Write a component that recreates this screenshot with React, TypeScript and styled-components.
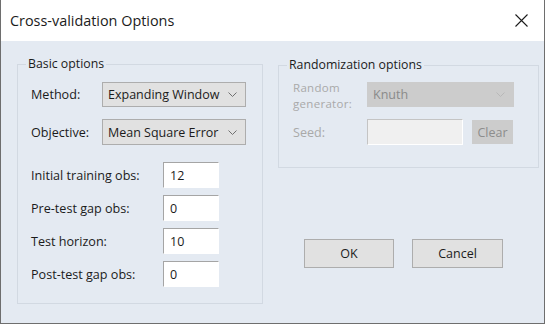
import styled, { createGlobalStyle } from 'styled-components'

const GlobalStyle = createGlobalStyle`
	html, body {
		margin: 0;
		padding: 0;
		background: #ffffff;
	}
	body {
		font-family: 'Open Sans', 'Noto Sans', sans-serif;
		color: #1b1b1b;
	}
`

const Window = styled.div`
	width: 545px;
	height: 324px;
	box-sizing: border-box;
	border: 1px solid #6e6e6e;
	border-top: none;
	background: #e4eaf2;
	display: flex;
	flex-direction: column;
	overflow: hidden;
`

const TitleBar = styled.div`
	height: 41px;
	flex: none;
	background: #ffffff;
	display: flex;
	align-items: center;
	justify-content: space-between;
	padding: 0 16px 0 9px;
`

const Title = styled.span`
	font-size: 14.4px;
	color: #1b1b1b;
`

const Content = styled.div`
	display: flex;
	gap: 15px;
	padding: 15px 0 0 16px;
`

const Group = styled.fieldset<{ $width: number }>`
	margin: 0;
	padding: 0;
	min-width: 0;
	width: ${(p) => p.$width}px;
	box-sizing: border-box;
	border: 1px solid #d2d9e2;
`

const Legend = styled.legend`
	margin-left: 8px;
	padding: 0 2px;
	font-size: 12.3px;
	line-height: 16px;
	color: #1b1b1b;
`

const GroupBody = styled.div<{ $pad: string }>`
	padding: ${(p) => p.$pad};
	display: flex;
	flex-direction: column;
`

const FormGrid = styled.div<{ $label: number; $field: string; $rowGap: number }>`
	display: grid;
	grid-template-columns: ${(p) => p.$label}px ${(p) => p.$field};
	row-gap: ${(p) => p.$rowGap}px;
	align-items: center;
`

const Label = styled.span<{ $disabled?: boolean }>`
	font-size: 12.6px;
	color: ${(p) => (p.$disabled ? '#a9a9a9' : '#1b1b1b')};
	white-space: nowrap;
`

const TwoLineLabel = styled(Label)`
	align-self: start;
	display: flex;
	flex-direction: column;
	font-size: 11.5px;
	line-height: 16px;
	letter-spacing: 0.3px;
	margin-top: -2px;
	height: 25px;
`

const SelectBox = styled.div<{ $width: number; $height?: number; $disabled?: boolean }>`
	width: ${(p) => p.$width}px;
	height: ${(p) => p.$height ?? 25}px;
	box-sizing: border-box;
	display: flex;
	align-items: center;
	justify-content: space-between;
	padding: 0 8px 0 5px;
	border: 1px solid ${(p) => (p.$disabled ? '#cccccc' : '#adadad')};
	background: ${(p) => (p.$disabled ? '#cccccc' : '#e1e1e1')};
	color: ${(p) => (p.$disabled ? '#8a8a8a' : '#1b1b1b')};
	font-size: 12.5px;
`

const NumberInput = styled.input<{ $width: number; $disabled?: boolean }>`
	width: ${(p) => p.$width}px;
	height: 26px;
	box-sizing: border-box;
	margin: 0;
	padding: 0 0 0 6px;
	border: 1px solid;
	border-color: ${(p) => (p.$disabled ? '#c4c4c4 #ffffff #ffffff #c4c4c4' : '#a5a5a5 #ffffff #ffffff #a5a5a5')};
	background: ${(p) => (p.$disabled ? '#f0f0f0' : '#ffffff')};
	font-family: inherit;
	font-size: 12.5px;
	color: #1b1b1b;
	outline: none;
`

const SeedRow = styled.div`
	display: flex;
	align-items: center;
	gap: 9px;
`

const Button = styled.button<{ $width: number; $height: number; $disabled?: boolean }>`
	width: ${(p) => p.$width}px;
	height: ${(p) => p.$height}px;
	box-sizing: border-box;
	margin: 0;
	padding: 0;
	border: 1px solid ${(p) => (p.$disabled ? '#cccccc' : '#adadad')};
	background: ${(p) => (p.$disabled ? '#cccccc' : '#e1e1e1')};
	color: ${(p) => (p.$disabled ? '#8d8d8d' : '#1b1b1b')};
	font-family: inherit;
	font-size: 12.5px;
`

const RightColumn = styled.div`
	display: flex;
	flex-direction: column;
	padding-top: 1px;
`

const ButtonRow = styled.div`
	display: flex;
	gap: 18px;
	margin: 71px 0 0 26px;
`

const Spacer = styled.div`
	height: 17px;
`

const Chevron = ({ color }: { color: string }) => (
	<svg width="9" height="5" viewBox="0 0 9 5">
		<polyline points="0.5,0.5 4.5,4.5 8.5,0.5" fill="none" stroke={color} strokeWidth="1" />
	</svg>
)

const CloseIcon = () => (
	<svg width="13" height="13" viewBox="0 0 13 13">
		<path d="M0.5 0.5 L12.5 12.5 M12.5 0.5 L0.5 12.5" stroke="#1b1b1b" strokeWidth="1.1" fill="none" />
	</svg>
)

const App = () => (
	<>
		<GlobalStyle />
		<Window>
			<TitleBar>
				<Title>Cross-validation Options</Title>
				<CloseIcon />
			</TitleBar>
			<Content>
				<Group $width={246}>
					<Legend>Basic options</Legend>
					<GroupBody $pad="10px 0 16px 13px">
						<FormGrid $label={71} $field="144px" $rowGap={12}>
							<Label>Method:</Label>
							<SelectBox $width={144}>
								Expanding Window
								<Chevron color="#707070" />
							</SelectBox>
							<Label>Objective:</Label>
							<SelectBox $width={144} $height={26}>
								Mean Square Error
								<Chevron color="#707070" />
							</SelectBox>
						</FormGrid>
						<Spacer />
						<FormGrid $label={132} $field="56px" $rowGap={7}>
							<Label>Initial training obs:</Label>
							<NumberInput $width={56} defaultValue="12" />
							<Label>Pre-test gap obs:</Label>
							<NumberInput $width={56} defaultValue="0" />
							<Label>Test horizon:</Label>
							<NumberInput $width={56} defaultValue="10" />
							<Label>Post-test gap obs:</Label>
							<NumberInput $width={56} defaultValue="0" />
						</FormGrid>
					</GroupBody>
				</Group>
				<RightColumn>
					<Group $width={261}>
						<Legend>Randomization options</Legend>
						<GroupBody $pad="9px 0 22px 14px">
							<FormGrid $label={74} $field="auto" $rowGap={12}>
								<TwoLineLabel $disabled>
									<span>Random</span>
									<span>generator:</span>
								</TwoLineLabel>
								<SelectBox $width={147} $disabled>
									Knuth
									<Chevron color="#b8b8b8" />
								</SelectBox>
								<Label $disabled>Seed:</Label>
								<SeedRow>
									<NumberInput $width={96} $disabled disabled />
									<Button $width={41} $height={24} $disabled disabled>
										Clear
									</Button>
								</SeedRow>
							</FormGrid>
						</GroupBody>
					</Group>
					<ButtonRow>
						<Button $width={90} $height={29}>
							OK
						</Button>
						<Button $width={91} $height={29}>
							Cancel
						</Button>
					</ButtonRow>
				</RightColumn>
			</Content>
		</Window>
	</>
)

export default App
